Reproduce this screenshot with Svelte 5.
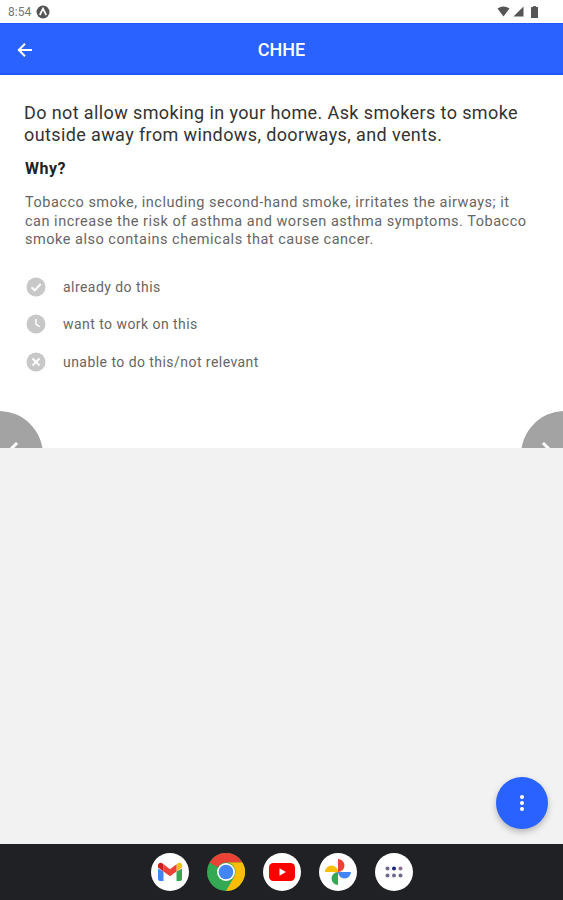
<script>
  const options = [
    { label: 'already do this', kind: 'check' },
    { label: 'want to work on this', kind: 'clock' },
    { label: 'unable to do this/not relevant', kind: 'x' }
  ];
</script>

<div class="screen">
  <div class="status">
    <div class="status-left">
      <span class="time">8:54</span>
      <svg class="a-icon" width="14" height="14" viewBox="0 0 14 14">
        <circle cx="7" cy="7" r="6.5" fill="#555" />
        <path d="M3.8 10 7 3.6 10.2 10" fill="none" stroke="#fff" stroke-width="1.7" />
      </svg>
    </div>
    <div class="status-right">
      <svg width="13" height="11" viewBox="0 0 13 11"><path d="M0.5 2.5Q6.5-1.5 12.5 2.5L6.5 10.5Z" fill="#555" /></svg>
      <svg width="11" height="11" viewBox="0 0 11 11"><path d="M0.5 10.5 10.5 0.5V10.5Z" fill="#555" /></svg>
      <svg class="batt" width="7" height="12" viewBox="0 0 7 12"><path d="M2.2 0h2.6v1H6.5a.5.5 0 0 1 .5.5V11.5a.5.5 0 0 1-.5.5H.5a.5.5 0 0 1-.5-.5V1.500a.5.5 0 0 1 .5-.5H2.200Z" fill="#555" /></svg>
    </div>
  </div>

  <header class="appbar">
    <svg class="back" width="18" height="18" viewBox="0 0 18 18">
      <path d="M16 9H3M9 2.800 2.800 9 9 15.200" fill="none" stroke="#fff" stroke-width="2" />
    </svg>
    <h1>CHHE</h1>
  </header>

  <section class="panel">
    <p class="lead">Do not allow smoking in your home. Ask smokers to smoke outside away from windows, doorways, and vents.</p>
    <h2>Why?</h2>
    <p class="body">Tobacco smoke, including second-hand smoke, irritates the airways; it can increase the risk of asthma and worsen asthma symptoms. Tobacco smoke also contains chemicals that cause cancer.</p>
    <ul>
      {#each options as o}
        <li>
          <svg width="20" height="20" viewBox="0 0 20 20">
            <circle cx="10" cy="10" r="9.500" fill="#c8c8c8" />
            {#if o.kind === 'check'}
              <path d="M5.500 10.200 8.700 13.400 14.700 7" fill="none" stroke="#fff" stroke-width="2" />
            {:else if o.kind === 'clock'}
              <path d="M10 5v5.300l3.800 2.300" fill="none" stroke="#fff" stroke-width="1.500" />
            {:else}
              <path d="M6.500 6.500l7 7M13.500 6.500l-7 7" fill="none" stroke="#fff" stroke-width="2" />
            {/if}
          </svg>
          <span>{o.label}</span>
        </li>
      {/each}
    </ul>

    <div class="nav-btn left">
      <svg width="20" height="20" viewBox="0 0 20 20"><path d="M12 3 5 10" stroke="#fff" stroke-width="3" fill="none" /></svg>
    </div>
    <div class="nav-btn right">
      <svg width="20" height="20" viewBox="0 0 20 20"><path d="M8 3l7 7" stroke="#fff" stroke-width="3" fill="none" /></svg>
    </div>
  </section>

  <main class="rest">
    <button class="fab" aria-label="More">
      <span></span><span></span><span></span>
    </button>
  </main>

  <nav class="dock">
    <div class="app">
      <svg width="26" height="20" viewBox="0 0 26 20">
        <path d="M1 6.500V17a2 2 0 0 0 2 2h3.500V9.500Z" fill="#4285f4" />
        <path d="M25 6.500V17a2 2 0 0 1-2 2h-3.500V9.500Z" fill="#34a853" />
        <path d="M19.500 9.500 25 5.500V3.500C25 1.200 22.500 0 20.800 1.300L19.500 2.300Z" fill="#fbbc04" />
        <path d="M6.500 9.500 13 14.300 19.500 9.500V2.300L13 7.200 6.500 2.300Z" fill="#ea4335" />
        <path d="M1 5.500 6.500 9.500V2.300L5.200 1.300C3.500 0 1 1.200 1 3.500Z" fill="#c5221f" />
      </svg>
    </div>
    <div class="chrome">
      <svg width="38" height="38" viewBox="0 0 38 38">
        <circle cx="19" cy="19" r="19" fill="#34a853" />
        <path d="M19 0A19 19 0 0 1 35.500 9.500H19A9.500 9.500 0 0 0 10.800 14.200L2.500 9.500A19 19 0 0 1 19 0Z" fill="#ea4335" />
        <path d="M35.500 9.500A19 19 0 0 1 19 38L27.200 23.700A9.500 9.500 0 0 0 27.200 14.300 9 9 0 0 0 19 9.500Z" fill="#fbbc04" />
        <circle cx="19" cy="19" r="9" fill="#fff" />
        <circle cx="19" cy="19" r="7.300" fill="#4285f4" />
      </svg>
    </div>
    <div class="app">
      <svg width="26" height="18" viewBox="0 0 26 18">
        <rect width="26" height="18" rx="4.500" fill="#f00" />
        <path d="M10.500 5.300 17 9l-6.500 3.700Z" fill="#fff" />
      </svg>
    </div>
    <div class="app">
      <svg width="26" height="26" viewBox="0 0 26 26">
        <path d="M0 13A6.500 6.500 0 0 1 13 13Z" fill="#fbbc04" />
        <path d="M13 0A6.500 6.500 0 0 1 13 13Z" fill="#ea4335" />
        <path d="M26 13A6.500 6.500 0 0 1 13 13Z" fill="#4285f4" />
        <path d="M13 26A6.500 6.500 0 0 1 13 13Z" fill="#34a853" />
      </svg>
    </div>
    <div class="app">
      <svg width="18" height="12" viewBox="0 0 18 12">
        <circle cx="2.500" cy="2.500" r="2" fill="#6d6a8f" /><circle cx="9" cy="2.500" r="2" fill="#1a237e" /><circle cx="15.500" cy="2.500" r="2" fill="#8a6f97" />
        <circle cx="2.500" cy="9.500" r="2" fill="#6d6a8f" /><circle cx="9" cy="9.500" r="2" fill="#6d6a8f" /><circle cx="15.500" cy="9.500" r="2" fill="#6d6a8f" />
      </svg>
    </div>
  </nav>
</div>

<style>
  :global(body) { margin: 0; }
  .screen {
    width: 563px;
    height: 900px;
    display: flex;
    flex-direction: column;
    font-family: Roboto, "Liberation Sans", sans-serif;
    background: #f2f2f2;
    overflow: hidden;
  }
  .status {
    height: 23px;
    flex: none;
    background: #fff;
    display: flex;
    align-items: center;
    justify-content: space-between;
    padding: 0 25px 0 8px;
    box-sizing: border-box;
  }
  .status-left { display: flex; align-items: center; gap: 5px; }
  .time { font-size: 12px; color: #777; }
  .status-right { display: flex; align-items: center; gap: 3px; }
  .batt { margin-left: 4px; }
  .appbar {
    height: 52px;
    flex: none;
    background: #2962ff;
    border-top: 1px solid #1f56f5;
    border-bottom: 2px solid #1f56f5;
    box-sizing: border-box;
    position: relative;
    display: flex;
    align-items: center;
    justify-content: center;
  }
  .back { position: absolute; left: 16px; top: 17px; }
  h1 { margin: 2px 0 0; color: #fff; font-size: 18px; font-weight: 500; }
  .panel {
    height: 373px;
    flex: none;
    background: #fff;
    position: relative;
    overflow: hidden;
    padding: 27px 25px 0 24px;
    box-sizing: border-box;
  }
  .lead { margin: 0; font-size: 18px; line-height: 22px; color: #333; letter-spacing: 0.39px; }
  h2 { margin: 13px 0 0 1px; font-size: 16px; line-height: 20px; font-weight: 700; color: #222; letter-spacing: 0.5px; }
  .body { margin: 15px 0 0 1px; font-size: 14.500px; line-height: 18.500px; color: #666; letter-spacing: 0.51px; }
  ul { list-style: none; margin: 27px 0 0; padding: 0 0 0 2px; display: flex; flex-direction: column; gap: 17.500px; }
  li { display: flex; align-items: center; gap: 17px; height: 20px; font-size: 14px; color: #666; letter-spacing: 0.45px; }
  .nav-btn {
    position: absolute;
    top: 336px;
    width: 88px;
    height: 88px;
    border-radius: 50%;
    background: #a3a3a3;
  }
  .nav-btn svg { position: absolute; top: 29px; }
  .left { left: -45px; }
  .left svg { left: 50px; }
  .right { right: -46px; }
  .right svg { right: 54px; }
  .rest { flex: 1; position: relative; }
  .fab {
    position: absolute;
    left: 496px;
    top: 329px;
    width: 52px;
    height: 52px;
    border: none;
    border-radius: 50%;
    background: #2962ff;
    box-shadow: 0 3px 6px rgba(0, 0, 0, 0.25);
    display: flex;
    flex-direction: column;
    align-items: center;
    justify-content: center;
    gap: 2px;
    padding: 0;
  }
  .fab span { width: 4px; height: 4px; border-radius: 50%; background: #fff; }
  .dock {
    height: 56px;
    flex: none;
    background: #202124;
    display: flex;
    align-items: center;
    justify-content: center;
    gap: 18px;
  }
  .app {
    width: 38px;
    height: 38px;
    border-radius: 50%;
    background: #fff;
    display: flex;
    align-items: center;
    justify-content: center;
  }
  .chrome { width: 38px; height: 38px; display: flex; }
</style>
